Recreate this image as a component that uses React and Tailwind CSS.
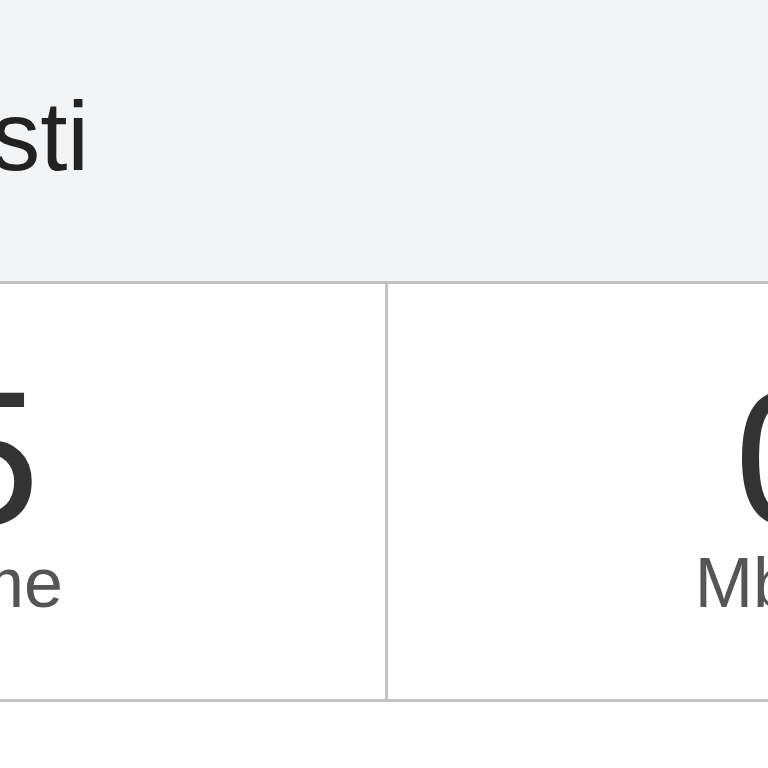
export default function App() {
  const stats = [
    { value: "5", label: "Time" },
    { value: "0", label: "Mbit/s" },
  ];

  return (
    <div className="w-[768px] h-[768px] overflow-hidden bg-white font-['Liberation_Sans',Arial,sans-serif]">
      <div className="w-[1600px] -ml-[412px]">
        <div className="h-[284px] bg-[#f3f4f6] border-b-[3px] border-[#c2c2c2] pl-[158px] pt-[80px]">
          <h2 className="text-[98px] leading-[112px] text-[#222] whitespace-nowrap">Acquisti</h2>
        </div>
        <div className="flex border-b-[3px] border-[#c2c2c2]">
          {stats.map((s, i) => (
            <div
              key={s.label}
              className={
                i === 0
                  ? "w-[800px] h-[415px] border-r-[3px] border-[#c2c2c2] flex flex-col items-center pt-[84px]"
                  : "w-[800px] h-[415px] flex flex-col items-center pt-[84px]"
              }
            >
              <span className="text-[192px] leading-[180px] text-[#333]">{s.value}</span>
              <span className="text-[70px] leading-[70px] text-[#555]">{s.label}</span>
            </div>
          ))}
        </div>
      </div>
    </div>
  );
}
